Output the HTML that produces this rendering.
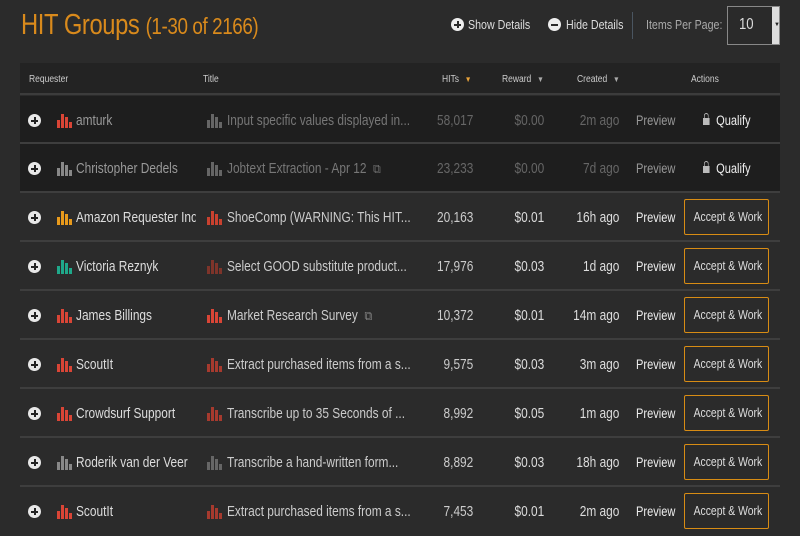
<!DOCTYPE html>
<html><head><style>
*{margin:0;padding:0;box-sizing:border-box}
body{width:800px;height:533px;background:#2b2b2b;font-family:"Liberation Sans",sans-serif;color:#ddd;position:relative;overflow:hidden;white-space:nowrap}
.a{position:absolute;white-space:nowrap}
.c{transform:scaleX(.82);transform-origin:0 50%}
h1{position:absolute;left:21px;top:9px;font-weight:normal;color:#d98a1c;font-size:29px;letter-spacing:-0.5px;transform:scaleX(.82);transform-origin:0 50%}
h1 span{font-size:23px}
.hdr{position:absolute;left:20px;top:63px;width:760px;height:32px;background:#232323;border-bottom:2px solid #3c3c3c;font-size:10px;color:#ccc}
.hdr .a{transform:scaleX(.85);transform-origin:0 50%}
.row{position:absolute;left:20px;width:760px;height:49px;border-bottom:2px solid #3e3e3e;font-size:14.5px}
.dk{background:#1e1e1e}
.pl{position:absolute;left:8px;top:18px;width:13px;height:13px;border-radius:50%;background:#e8e8e8}
.pl:before{content:"";position:absolute;left:3px;top:5.5px;width:7px;height:2px;background:#222}
.pl:after{content:"";position:absolute;left:5.5px;top:3px;width:2px;height:7px;background:#222}
.bars{position:absolute;top:18px;width:16px;height:14px}
.bars i{position:absolute;bottom:0;width:3px}
.bars i:nth-child(1){left:0;height:8px}
.bars i:nth-child(2){left:4px;height:14px}
.bars i:nth-child(3){left:8px;height:11px}
.bars i:nth-child(4){left:12px;height:6px}
.t{position:absolute;top:17px;transform:scaleX(.82);transform-origin:0 50%}
.r{position:absolute;top:17px;text-align:right;transform:scaleX(.82);transform-origin:100% 50%}
.btn{position:absolute;left:664px;top:6px;width:85px;height:36px;border:1.5px solid #d88c14;border-radius:2px;font-size:13px;color:#ddd;text-align:center;line-height:33px;overflow:hidden}
.btn span{display:inline-block;transform:scaleX(.8)}
.lock{display:inline-block;width:8px;height:7px;background:#bbb;position:relative;margin-right:8px;vertical-align:0}
.lock:before{content:"";position:absolute;left:1px;top:-5px;width:6px;height:6px;border:1.5px solid #bbb;border-bottom:none;border-radius:3px 3px 0 0;box-sizing:border-box}
</style></head><body>
<h1>HIT Groups <span>(1-30 of 2166)</span></h1>
<div class="a" style="left:451px;top:18px;width:13px;height:13px;border-radius:50%;background:#eee"></div>
<div class="a" style="left:454px;top:23.5px;width:7px;height:2px;background:#2b2b2b"></div>
<div class="a" style="left:456.5px;top:21px;width:2px;height:7px;background:#2b2b2b"></div>
<div class="a c" style="left:468px;top:17px;font-size:13px;color:#ddd">Show Details</div>
<div class="a" style="left:548px;top:18px;width:13px;height:13px;border-radius:50%;background:#eee"></div>
<div class="a" style="left:551px;top:23.5px;width:7px;height:2px;background:#2b2b2b"></div>
<div class="a c" style="left:566px;top:17px;font-size:13px;color:#ddd">Hide Details</div>
<div class="a" style="left:632px;top:12px;width:1px;height:27px;background:#4a5560"></div>
<div class="a c" style="left:646px;top:17px;font-size:13px;color:#aaa">Items Per Page:</div>
<div class="a" style="left:727px;top:6px;width:53px;height:39px;border:1px solid #888;background:#2a2a2a"></div>
<div class="a" style="left:772px;top:7px;width:7px;height:37px;background:#ddd"></div>
<div class="a" style="left:774px;top:22px;font-size:6px;color:#222">▼</div>
<div class="a c" style="left:739px;top:16px;font-size:16px;color:#ddd">10</div>

<div class="hdr">
<div class="a" style="left:9px;top:11px">Requester</div>
<div class="a" style="left:183px;top:11px">Title</div>
<div class="a" style="left:422px;top:11px">HITs <span style="color:#e8a23a;font-size:8px;margin-left:4px">▼</span></div>
<div class="a" style="left:482px;top:11px">Reward <span style="color:#aaa;font-size:8px;margin-left:4px">▼</span></div>
<div class="a" style="left:557px;top:11px">Created <span style="color:#aaa;font-size:8px;margin-left:4px">▼</span></div>
<div class="a" style="left:671px;top:11px">Actions</div>
</div>

<div class="row dk" style="top:96px;height:48px"><div class="pl"></div>
<div class="bars" style="left:37px"><i style="background:#d94536"></i><i style="background:#d94536"></i><i style="background:#d94536"></i><i style="background:#d94536"></i></div>
<div class="t" style="left:56px;color:#999">amturk</div>
<div class="bars" style="left:187px"><i style="background:#666"></i><i style="background:#666"></i><i style="background:#666"></i><i style="background:#666"></i></div>
<div class="t" style="left:207px;color:#777">Input specific values displayed in...</div>
<div class="r" style="right:307px;color:#666">58,017</div>
<div class="r" style="right:236px;color:#666">$0.00</div>
<div class="r" style="right:161px;color:#666">2m ago</div>
<div class="t" style="left:616px;font-size:13.5px;color:#999">Preview</div>
<div class="t" style="left:683px;font-size:13.5px;color:#eee"><span class="lock"></span>Qualify</div>
</div>

<div class="row dk" style="top:144px"><div class="pl"></div>
<div class="bars" style="left:37px"><i style="background:#888"></i><i style="background:#888"></i><i style="background:#888"></i><i style="background:#888"></i></div>
<div class="t" style="left:56px;color:#999">Christopher Dedels</div>
<div class="bars" style="left:187px"><i style="background:#666"></i><i style="background:#666"></i><i style="background:#666"></i><i style="background:#666"></i></div>
<div class="t" style="left:207px;color:#777">Jobtext Extraction - Apr 12 &nbsp;<span style="font-size:13px">⧉</span></div>
<div class="r" style="right:307px;color:#666">23,233</div>
<div class="r" style="right:236px;color:#666">$0.00</div>
<div class="r" style="right:161px;color:#666">7d ago</div>
<div class="t" style="left:616px;font-size:13.5px;color:#999">Preview</div>
<div class="t" style="left:683px;font-size:13.5px;color:#eee"><span class="lock"></span>Qualify</div>
</div>

<div class="row" style="top:193px"><div class="pl"></div>
<div class="bars" style="left:37px"><i style="background:#e89a1c"></i><i style="background:#e89a1c"></i><i style="background:#e89a1c"></i><i style="background:#e89a1c"></i></div>
<div class="t" style="left:56px;width:146px;overflow:hidden">Amazon Requester Inc</div>
<div class="bars" style="left:187px"><i style="background:#c9412f"></i><i style="background:#c9412f"></i><i style="background:#c9412f"></i><i style="background:#c9412f"></i></div>
<div class="t" style="left:207px;color:#ccc">ShoeComp (WARNING: This HIT...</div>
<div class="r" style="right:307px;color:#ccc">20,163</div>
<div class="r" style="right:236px">$0.01</div>
<div class="r" style="right:161px">16h ago</div>
<div class="t" style="left:616px;font-size:13.5px;color:#eee">Preview</div>
<div class="btn"><span>Accept &amp; Work</span></div>
</div>

<div class="row" style="top:242px"><div class="pl"></div>
<div class="bars" style="left:37px"><i style="background:#1fa88a"></i><i style="background:#1fa88a"></i><i style="background:#1fa88a"></i><i style="background:#1fa88a"></i></div>
<div class="t" style="left:56px">Victoria Reznyk</div>
<div class="bars" style="left:187px"><i style="background:#7e342a"></i><i style="background:#7e342a"></i><i style="background:#7e342a"></i><i style="background:#7e342a"></i></div>
<div class="t" style="left:207px;color:#ccc">Select GOOD substitute product...</div>
<div class="r" style="right:307px;color:#ccc">17,976</div>
<div class="r" style="right:236px">$0.03</div>
<div class="r" style="right:161px">1d ago</div>
<div class="t" style="left:616px;font-size:13.5px;color:#eee">Preview</div>
<div class="btn"><span>Accept &amp; Work</span></div>
</div>

<div class="row" style="top:291px"><div class="pl"></div>
<div class="bars" style="left:37px"><i style="background:#d94536"></i><i style="background:#d94536"></i><i style="background:#d94536"></i><i style="background:#d94536"></i></div>
<div class="t" style="left:56px">James Billings</div>
<div class="bars" style="left:187px"><i style="background:#d94536"></i><i style="background:#d94536"></i><i style="background:#d94536"></i><i style="background:#d94536"></i></div>
<div class="t" style="left:207px;color:#ccc">Market Research Survey &nbsp;<span style="font-size:13px;color:#888">⧉</span></div>
<div class="r" style="right:307px;color:#ccc">10,372</div>
<div class="r" style="right:236px">$0.01</div>
<div class="r" style="right:161px">14m ago</div>
<div class="t" style="left:616px;font-size:13.5px;color:#eee">Preview</div>
<div class="btn"><span>Accept &amp; Work</span></div>
</div>

<div class="row" style="top:340px"><div class="pl"></div>
<div class="bars" style="left:37px"><i style="background:#d94536"></i><i style="background:#d94536"></i><i style="background:#d94536"></i><i style="background:#d94536"></i></div>
<div class="t" style="left:56px">ScoutIt</div>
<div class="bars" style="left:187px"><i style="background:#a63a2e"></i><i style="background:#a63a2e"></i><i style="background:#a63a2e"></i><i style="background:#a63a2e"></i></div>
<div class="t" style="left:207px;color:#ccc">Extract purchased items from a s...</div>
<div class="r" style="right:307px;color:#ccc">9,575</div>
<div class="r" style="right:236px">$0.03</div>
<div class="r" style="right:161px">3m ago</div>
<div class="t" style="left:616px;font-size:13.5px;color:#eee">Preview</div>
<div class="btn"><span>Accept &amp; Work</span></div>
</div>

<div class="row" style="top:389px"><div class="pl"></div>
<div class="bars" style="left:37px"><i style="background:#d94536"></i><i style="background:#d94536"></i><i style="background:#d94536"></i><i style="background:#d94536"></i></div>
<div class="t" style="left:56px">Crowdsurf Support</div>
<div class="bars" style="left:187px"><i style="background:#a63a2e"></i><i style="background:#a63a2e"></i><i style="background:#a63a2e"></i><i style="background:#a63a2e"></i></div>
<div class="t" style="left:207px;color:#ccc">Transcribe up to 35 Seconds of ...</div>
<div class="r" style="right:307px;color:#ccc">8,992</div>
<div class="r" style="right:236px">$0.05</div>
<div class="r" style="right:161px">1m ago</div>
<div class="t" style="left:616px;font-size:13.5px;color:#eee">Preview</div>
<div class="btn"><span>Accept &amp; Work</span></div>
</div>

<div class="row" style="top:438px"><div class="pl"></div>
<div class="bars" style="left:37px"><i style="background:#888"></i><i style="background:#888"></i><i style="background:#888"></i><i style="background:#888"></i></div>
<div class="t" style="left:56px">Roderik van der Veer</div>
<div class="bars" style="left:187px"><i style="background:#666"></i><i style="background:#666"></i><i style="background:#666"></i><i style="background:#666"></i></div>
<div class="t" style="left:207px;color:#ccc">Transcribe a hand-written form...</div>
<div class="r" style="right:307px;color:#ccc">8,892</div>
<div class="r" style="right:236px">$0.03</div>
<div class="r" style="right:161px">18h ago</div>
<div class="t" style="left:616px;font-size:13.5px;color:#eee">Preview</div>
<div class="btn"><span>Accept &amp; Work</span></div>
</div>

<div class="row" style="top:487px;border:none"><div class="pl"></div>
<div class="bars" style="left:37px"><i style="background:#d94536"></i><i style="background:#d94536"></i><i style="background:#d94536"></i><i style="background:#d94536"></i></div>
<div class="t" style="left:56px">ScoutIt</div>
<div class="bars" style="left:187px"><i style="background:#a63a2e"></i><i style="background:#a63a2e"></i><i style="background:#a63a2e"></i><i style="background:#a63a2e"></i></div>
<div class="t" style="left:207px;color:#ccc">Extract purchased items from a s...</div>
<div class="r" style="right:307px;color:#ccc">7,453</div>
<div class="r" style="right:236px">$0.01</div>
<div class="r" style="right:161px">2m ago</div>
<div class="t" style="left:616px;font-size:13.5px;color:#eee">Preview</div>
<div class="btn"><span>Accept &amp; Work</span></div>
</div>
</body></html>
